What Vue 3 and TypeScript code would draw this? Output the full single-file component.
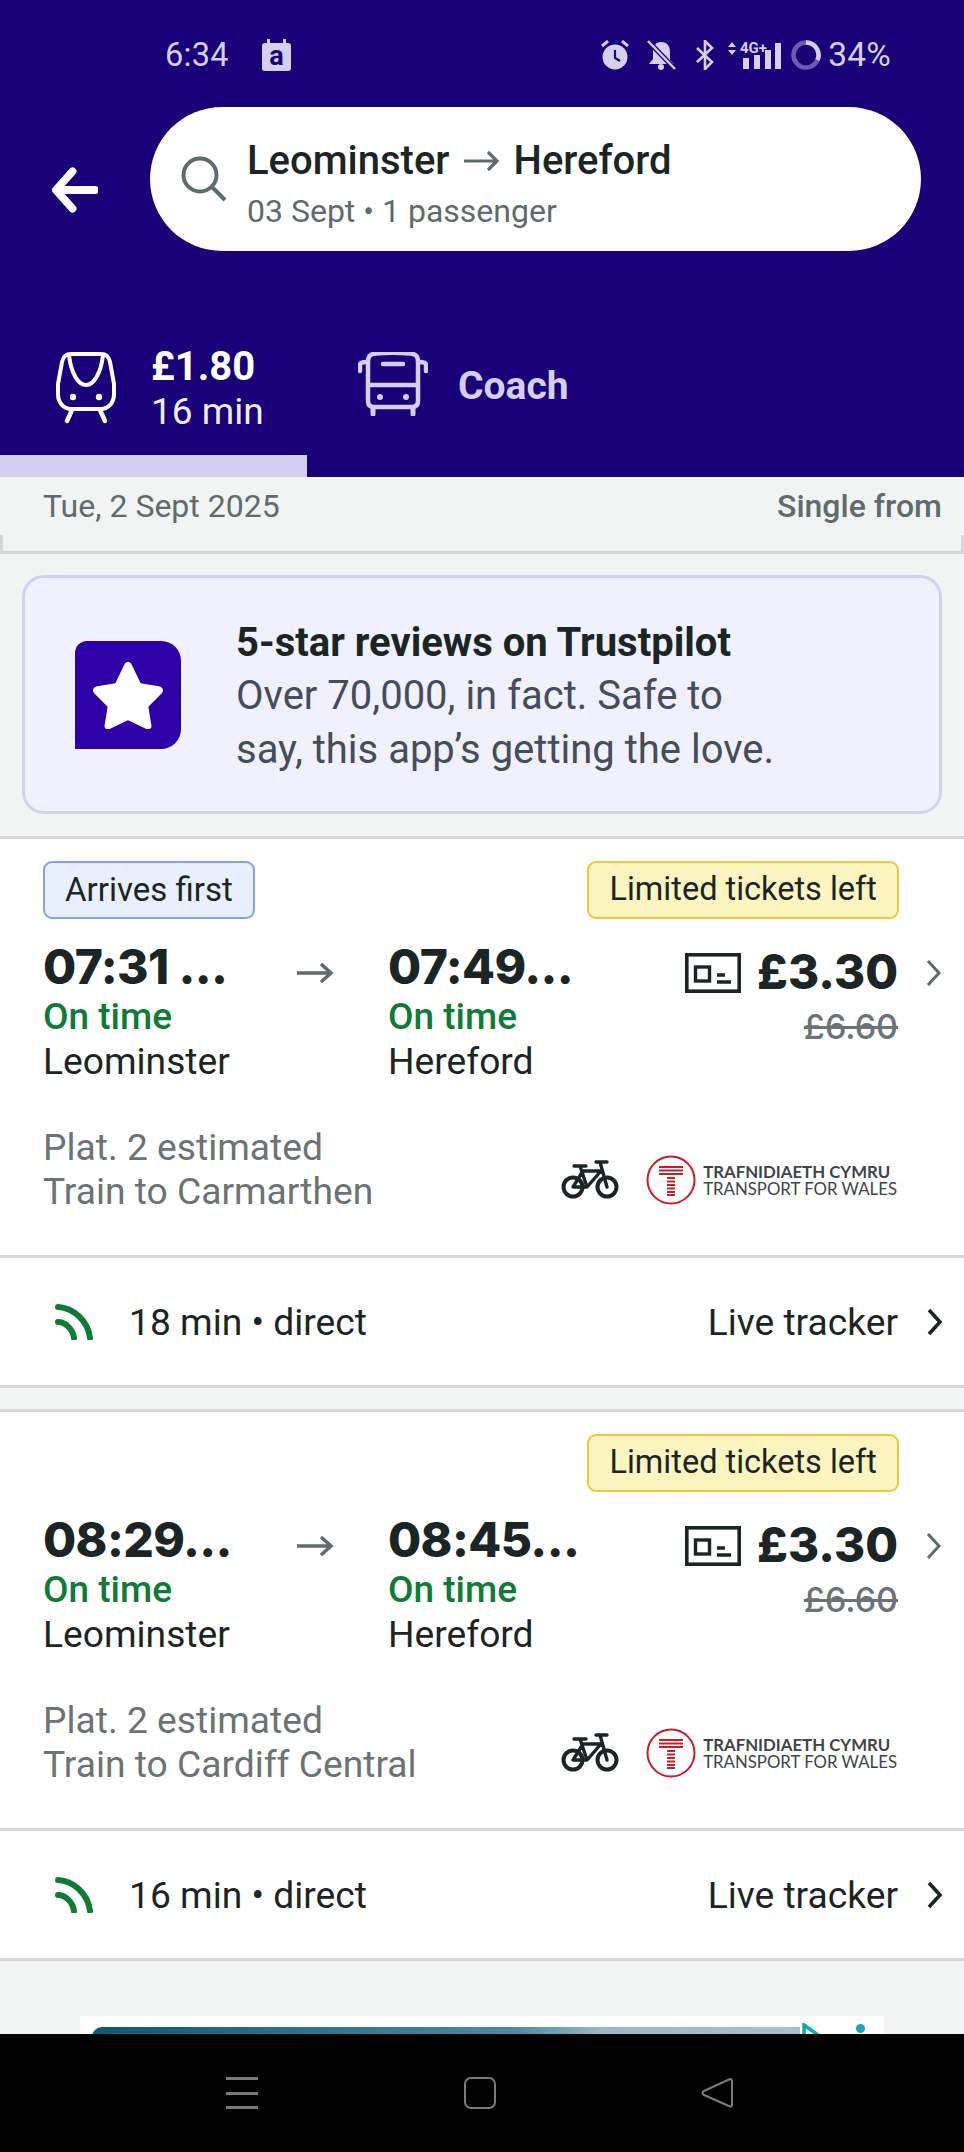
<script setup lang="ts">
interface Journey {
  badge?: string
  dep: string
  arr: string
  dest: string
  duration: string
}
const journeys: Journey[] = [
  { badge: 'Arrives first', dep: '07:31 ...', arr: '07:49...', dest: 'Train to Carmarthen', duration: '18 min • direct' },
  { dep: '08:29...', arr: '08:45...', dest: 'Train to Cardiff Central', duration: '16 min • direct' },
]
</script>

<template>
  <div class="page">
    <header class="header">
      <div class="status">
        <div class="status-left">
          <span class="clock">6:34</span>
          <span class="s-a">a</span>
        </div>
        <div class="status-right">
          <svg class="s-icon s-alarm" viewBox="0 0 28 30"><circle cx="14" cy="17" r="12.500" fill="#d5d0f0"/><path d="M14 10v8l5 3" stroke="#1a0078" stroke-width="2.200" fill="none"/><path d="M1 6l6-5M27 6l-6-5" stroke="#d5d0f0" stroke-width="3"/></svg>
          <svg class="s-icon s-bell" viewBox="0 0 29 30"><path d="M14 2c6 0 9 4 9 10v8l4 4H2l4-5v-7c0-6 3-10 8-10z" fill="#d5d0f0"/><circle cx="14" cy="27" r="3" fill="#d5d0f0"/><path d="M1 1l27 28" stroke="#1a0078" stroke-width="5"/><path d="M1 1l27 28" stroke="#d5d0f0" stroke-width="2.500"/></svg>
          <svg class="s-bt" viewBox="0 0 18 30"><path d="M1 8l15 14-7 7V1l7 7L1 22" stroke="#d5d0f0" stroke-width="2.600" fill="none"/></svg>
          <div class="s-signal">
            <svg viewBox="0 0 54 30"><path d="M1 7l4-5 4 5zM1 10l4 5 4-5z" fill="#d5d0f0"/><text x="13" y="13" font-family="Roboto, sans-serif" font-weight="700" font-size="15" fill="#d5d0f0">4G+</text><rect x="16" y="18" width="6" height="11" fill="#d5d0f0"/><rect x="27" y="15" width="6" height="14" fill="#d5d0f0"/><rect x="38" y="10" width="6" height="19" fill="#d5d0f0"/><rect x="48" y="3" width="6" height="26" fill="#d5d0f0"/></svg>
          </div>
          <svg class="s-ring" viewBox="0 0 30 30"><circle cx="15" cy="15" r="12.500" fill="none" stroke="#6a5cb0" stroke-width="4.500"/><path d="M15 2.500A12.500 12.500 0 0 1 26.500 20" fill="none" stroke="#d5d0f0" stroke-width="4.500"/></svg>
          <span class="battery">34%</span>
        </div>
      </div>

      <div class="search-row">
        <svg class="back" viewBox="0 0 48 46"><path d="M22 4L5 23l17 19M6 23h39" fill="none" stroke="#fff" stroke-width="8" stroke-linecap="round" stroke-linejoin="round"/></svg>
        <div class="pill">
          <svg class="search-icon" viewBox="0 0 46 46"><circle cx="19" cy="19" r="16.500" fill="none" stroke="#5f6b6c" stroke-width="4"/><path d="M31 31l13 13" stroke="#5f6b6c" stroke-width="4"/></svg>
          <div class="pill-text">
            <div class="route">
              <span>Leominster</span>
              <svg class="route-arrow" viewBox="0 0 36 22"><path d="M0 11h33M24 2l9 9-9 9" fill="none" stroke="#5f6b6c" stroke-width="3.200"/></svg>
              <span>Hereford</span>
            </div>
            <div class="route-sub">03 Sept • 1 passenger</div>
          </div>
        </div>
      </div>

      <div class="tabs">
        <div class="tab tab-active">
          <svg class="train" viewBox="0 0 60 72"><path d="M15 2h30c5 0 8 3 9 8l4 22v10c0 9-6 15-13 15H15C8 57 2 51 2 42V32l4-22c1-5 4-8 9-8z" fill="none" stroke="#fff" stroke-width="4"/><path d="M13 3c2 18 9 30 17 30s15-12 17-30" fill="none" stroke="#fff" stroke-width="4"/><circle cx="17" cy="45" r="3.200" fill="#fff"/><circle cx="43" cy="45" r="3.200" fill="#fff"/><path d="M16 58l-5 11M44 58l5 11" stroke="#fff" stroke-width="4.500" stroke-linecap="round"/></svg>
          <div class="tab-text">
            <div class="tab-price">£1.80</div>
            <div class="tab-time">16 min</div>
          </div>
        </div>
        <div class="tab tab-coach">
          <svg class="coach" viewBox="0 0 70 64"><path d="M10 10c0-6 2-8 8-8.500 12-1 22-1 34 0 6 .5 8 2.500 8 8.500v39c0 4-2 6-6 6H16c-4 0-6-2-6-6z" fill="none" stroke="#d4d0ec" stroke-width="4.500"/><path d="M10 33h50" stroke="#d4d0ec" stroke-width="4.500"/><path d="M25 12h20" stroke="#d4d0ec" stroke-width="4.500" stroke-linecap="round"/><path d="M2 19v-6c0-2 1-3 6-3M68 19v-6c0-2-1-3-6-3" fill="none" stroke="#d4d0ec" stroke-width="4.500" stroke-linecap="round"/><circle cx="22" cy="45" r="3" fill="#d4d0ec"/><circle cx="48" cy="45" r="3" fill="#d4d0ec"/><path d="M15 56v6M55 56v6" stroke="#d4d0ec" stroke-width="5" stroke-linecap="round"/></svg>
          <span class="coach-label">Coach</span>
        </div>
      </div>
      <div class="tab-indicator"></div>
    </header>

    <div class="date-row">
      <span class="date">Tue, 2 Sept 2025</span>
      <span class="single">Single from</span>
    </div>
    <div class="date-foot"></div>

    <section class="promo">
      <div class="promo-icon">
        <svg viewBox="0 0 74 70"><path d="M37 1c2 0 3 1 4 3l9 19 19 3c4 1 5 4 3 7L58 47l3 19c1 3-2 5-5 4L37 61 18 70c-3 1-6-1-5-4l3-19L2 33c-2-3-1-6 3-7l19-3 9-19c1-2 2-3 4-3z" fill="#fff"/></svg>
      </div>
      <div class="promo-text">
        <div class="promo-title">5-star reviews on Trustpilot</div>
        <div class="promo-body">Over 70,000, in fact. Safe to<br />say, this app’s getting the love.</div>
      </div>
    </section>

    <article v-for="j in journeys" :key="j.dep" class="journey">
      <div class="main">
        <div class="tags">
          <span v-if="j.badge" class="tag tag-blue">{{ j.badge }}</span>
          <span class="tag tag-yellow">Limited tickets left</span>
        </div>
        <div class="times">
          <div class="stop">
            <div class="time">{{ j.dep }}</div>
            <div class="ontime">On time</div>
            <div class="station">Leominster</div>
          </div>
          <svg class="mid-arrow" viewBox="0 0 38 24"><path d="M1 12h34M25 3l10 9-10 9" fill="none" stroke="#5f6b6c" stroke-width="3.500"/></svg>
          <div class="stop stop-arr">
            <div class="time">{{ j.arr }}</div>
            <div class="ontime">On time</div>
            <div class="station">Hereford</div>
          </div>
          <div class="fare">
            <div class="fare-top">
              <svg class="ticket" viewBox="0 0 56 40"><rect x="1.800" y="1.800" width="52.400" height="36.400" fill="none" stroke="#1c2526" stroke-width="3.600"/><rect x="10.500" y="14" width="14" height="14" fill="none" stroke="#1c2526" stroke-width="3.400"/><path d="M32 22h8M32 29h14" stroke="#1c2526" stroke-width="3.400"/></svg>
              <span class="price">£3.30</span>
            </div>
            <div class="old-price">£6.60</div>
          </div>
          <svg class="chev chev-grey" viewBox="0 0 16 28"><path d="M2 2l11 12L2 26" fill="none" stroke="#5f6b6c" stroke-width="3"/></svg>
        </div>
        <div class="details">
          <div class="plat">Plat. 2 estimated<br />{{ j.dest }}</div>
          <div class="brand">
            <svg class="bike" viewBox="0 0 58 40"><circle cx="12" cy="27" r="9.500" fill="none" stroke="#1c2526" stroke-width="4"/><circle cx="46" cy="27" r="9.500" fill="none" stroke="#1c2526" stroke-width="4"/><path d="M19 6l7 21H12l10-16h18L26 27M13 6h12M35 2h11M39 2l7 25" fill="none" stroke="#1c2526" stroke-width="3.400" stroke-linejoin="round" stroke-linecap="round"/></svg>
            <svg class="tfw-mark" viewBox="0 0 50 50"><circle cx="25" cy="25" r="23.500" fill="none" stroke="#c8202b" stroke-width="2"/><path d="M13 12h24M13 15.500h24M13 19h24M21 23h8M21 26.500h8M21 30h8M21 33.500h8M21 37h8M21 40h8" stroke="#c8202b" stroke-width="2"/></svg>
            <div class="tfw-text">
              <div class="tfw-cy">TRAFNIDIAETH CYMRU</div>
              <div class="tfw-en">TRANSPORT FOR WALES</div>
            </div>
          </div>
        </div>
      </div>
      <div class="live">
        <svg class="live-icon" viewBox="0 0 38 36"><path d="M3 3c16 1 30 14 32 31M3 18c8 0 15 8 16 16" fill="none" stroke="#0f7b37" stroke-width="6" stroke-linecap="round"/></svg>
        <span class="duration">{{ j.duration }}</span>
        <span class="tracker">Live tracker</span>
        <svg class="chev" viewBox="0 0 16 28"><path d="M2 2l11 12L2 26" fill="none" stroke="#1c2526" stroke-width="3.600"/></svg>
      </div>
    </article>

    <div class="ad">
      <div class="ad-image"></div>
      <svg class="ad-play" viewBox="0 0 28 36"><path d="M2 2l24 17L2 34z" fill="#e8f4f8" stroke="#14a5b8" stroke-width="3.500"/></svg>
      <span class="ad-dot"></span>
    </div>

    <nav class="navbar">
      <div class="nav-menu"><i></i><i></i><i></i></div>
      <div class="nav-home"></div>
      <svg class="nav-back" viewBox="0 0 32 32"><path d="M29 2c1 0 2 .5 2 2v24c0 1.500-1 2-2 1.500L3 18c-2-1-2-3 0-4L29 2z" fill="none" stroke="#7a7a7a" stroke-width="2"/></svg>
    </nav>
  </div>
</template>

<style>
html, body { margin: 0; padding: 0; background: #f2f4f3; }
</style>

<style scoped>
.page {
  position: relative;
  width: 964px;
  height: 2152px;
  overflow: hidden;
  background: #f2f4f3;
  font-family: Roboto, "Noto Sans", sans-serif;
  color: #1c2526;
}

/* header */
.header { background: #1a0078; height: 477px; display: flex; flex-direction: column; }
.status {
  height: 107px;
  box-sizing: border-box;
  padding: 39px 73px 0 165px;
  display: flex;
  justify-content: space-between;
  align-items: flex-start;
  color: #d5d0f0;
  font-size: 32px;
  line-height: 32px;
}
.status-left { display: flex; gap: 33px; align-items: center; }
.clock { font-size: 32.500px; letter-spacing: .3px; }
.s-a {
  position: relative;
  width: 29px;
  height: 28px;
  margin-top: 3px;
  border-radius: 3px;
  background: #d5d0f0;
  color: #1a0078;
  font-size: 27px;
  font-weight: 700;
  line-height: 26px;
  text-align: center;
}
.s-a::before {
  content: "";
  position: absolute;
  left: 5px;
  right: 5px;
  top: -4px;
  height: 5px;
  box-sizing: border-box;
  border: solid #d5d0f0;
  border-width: 0 3px;
}
.status-right { display: flex; align-items: center; }
.s-icon { width: 28px; height: 30px; }
.s-alarm { margin-right: 18px; }
.s-bell { width: 29px; margin-right: 20px; }
.s-bt { width: 18px; height: 30px; margin-right: 13px; }
.s-signal { width: 54px; height: 30px; margin-right: 10px; }
.s-signal svg { width: 100%; height: 100%; display: block; overflow: visible; }
.s-ring { width: 30px; height: 30px; margin-right: 7px; }
.battery { font-size: 33.500px; letter-spacing: .2px; }

.search-row { display: flex; align-items: center; height: 144px; padding-left: 51px; gap: 52px; }
.back { width: 47px; height: 46px; margin-top: 22px; }
.pill {
  width: 771px;
  height: 144px;
  box-sizing: border-box;
  background: #fff;
  border-radius: 72px;
  padding-left: 31px;
  display: flex;
  align-items: center;
  gap: 20px;
}
.search-icon { width: 46px; height: 46px; }
.pill-text { display: flex; flex-direction: column; margin-top: 14px; }
.route { display: flex; align-items: center; gap: 14px; font-size: 40px; line-height: 50px; font-weight: 500; color: #1c2526; }
.route-arrow { width: 36px; height: 22px; }
.route-sub { font-size: 32px; line-height: 50px; color: #5f6b6c; }

.tabs { display: flex; height: 204px; box-sizing: border-box; padding-top: 101px; }
.tab { display: flex; align-items: flex-start; }
.tab-active { width: 307px; padding-left: 56px; box-sizing: border-box; gap: 35px; }
.train { width: 60px; height: 72px; }
.tab-text { margin-top: -7px; }
.tab-price { font-size: 40px; line-height: 44px; font-weight: 700; color: #fff; }
.tab-time { font-size: 37px; line-height: 46px; color: #f0eefb; }
.tab-coach { margin-left: 51px; gap: 30px; }
.coach { width: 70px; height: 64px; }
.coach-label { font-size: 39px; line-height: 62px; font-weight: 700; color: #d4d0ec; margin-top: 3px; }
.tab-indicator { width: 307px; height: 22px; background: #d4cff2; }

/* date */
.date-row {
  height: 58px;
  padding: 0 22px 0 43px;
  display: flex;
  justify-content: space-between;
  align-items: center;
  font-size: 32px;
  color: #5f6b6c;
}
.single { font-weight: 500; }
.date-foot { height: 19px; box-sizing: border-box; border: solid #d5d8d6; border-width: 0 3px 3px; }

/* promo */
.promo {
  margin: 21px 22px 22px;
  height: 239px;
  box-sizing: border-box;
  background: #f1f1fd;
  border: 3px solid #d4d0f0;
  border-radius: 22px;
  padding-left: 50px;
  display: flex;
  align-items: center;
  gap: 55px;
}
.promo-icon {
  width: 106px;
  height: 108px;
  flex: none;
  background: #2e00a8;
  border-radius: 12px 20px 20px 0;
  display: flex;
  align-items: center;
  justify-content: center;
}
.promo-icon svg { width: 72px; height: 68px; }
.promo-text { margin-top: 5px; }
.promo-title { font-size: 40px; line-height: 52px; font-weight: 700; color: #1c2526; }
.promo-body { font-size: 40px; line-height: 54px; color: #454c5c; }

/* journey */
.journey { background: #fff; border-top: 3px solid #d5d8d6; border-bottom: 3px solid #d5d8d6; margin-bottom: 21px; }
.main { padding: 22px 24px 42px 43px; border-bottom: 3px solid #d5d8d6; }
.tags { display: flex; justify-content: space-between; padding-right: 41px; height: 58px; }
.tag {
  box-sizing: border-box;
  height: 58px;
  border-radius: 9px;
  border: 2.500px solid;
  font-size: 33px;
  line-height: 53px;
  padding: 0 20px;
  color: #1c2526;
  font-weight: 400;
}
.tag-blue { background: #e8f0fd; border-color: #84a4e0; }
.tag-yellow { background: #fdf5c0; border-color: #eec93c; margin-left: auto; font-size: 32.500px; }

.times { display: flex; align-items: flex-start; margin-top: 20px; }
.stop { width: 253px; flex: none; }
.stop-arr { width: 250px; margin-left: 54px; }
.mid-arrow { width: 38px; height: 24px; flex: none; margin-top: 22px; }
.time { font-family: Inter, Roboto, sans-serif; font-size: 48px; line-height: 56px; font-weight: 800; letter-spacing: -.6px; color: #1c2526; white-space: nowrap; }
.ontime { font-size: 37px; line-height: 44px; font-weight: 500; color: #0f7b37; }
.station { font-size: 37.200px; line-height: 44px; color: #1c2526; }
.fare { width: 213px; flex: none; margin-left: 47px; margin-top: 5px; display: flex; flex-direction: column; align-items: flex-end; }
.fare-top { display: flex; align-items: center; gap: 16px; height: 56px; }
.ticket { width: 56px; height: 40px; margin-top: 2px; }
.price { font-family: Inter, Roboto, sans-serif; font-size: 47.500px; line-height: 56px; font-weight: 800; color: #1c2526; }
.old-price { font-family: Inter, Roboto, sans-serif; font-size: 34px; line-height: 46px; font-weight: 500; color: #6b7375; text-decoration: line-through; margin-top: 4px; }
.chev { width: 16px; height: 28px; flex: none; }
.chev-grey { margin: 20px 0 0 28px; }

.details { display: flex; justify-content: space-between; align-items: center; margin-top: 42px; padding-right: 43px; }
.plat { font-size: 37.200px; line-height: 44px; color: #6b7375; }
.brand { display: flex; align-items: center; margin-top: 22px; }
.bike { width: 58px; height: 40px; margin-right: 27px; }
.tfw-mark { width: 50px; height: 50px; margin-right: 7px; }
.tfw-text { font-family: Lato, "Open Sans", sans-serif; font-size: 16.800px; line-height: 17px; color: #3d4548; white-space: nowrap; }
.tfw-cy { font-weight: 700; }

.live { height: 127px; display: flex; align-items: center; padding: 0 21px 0 55px; }
.live-icon { width: 38px; height: 36px; margin-right: 36px; }
.duration { font-size: 37.200px; color: #1c2526; }
.tracker { font-size: 37.200px; color: #1c2526; margin-left: auto; margin-right: 29px; }

/* ad */
.ad {
  position: relative;
  margin: 55px 80px 0;
  height: 30px;
  background: #fff;
}
.ad-image {
  position: absolute;
  left: 12px;
  top: 11px;
  width: 708px;
  height: 19px;
  border-radius: 10px 0 0 0;
  background: linear-gradient(90deg, #0c5a72, #4d8ba3 60%, #9ab8c8 72%, #a7c2cf 100%);
}
.ad-play { position: absolute; left: 722px; top: 7px; width: 28px; height: 36px; }
.ad-dot { position: absolute; left: 776px; top: 8px; width: 9px; height: 9px; border-radius: 50%; background: #14a5b8; }

/* nav */
.navbar {
  position: absolute;
  left: 0;
  right: 0;
  bottom: 0;
  height: 118px;
  background: #000;
  display: flex;
  align-items: flex-start;
  padding: 43px 231px 0 226px;
  box-sizing: border-box;
  justify-content: space-between;
}
.nav-menu { width: 32px; height: 32px; display: flex; flex-direction: column; justify-content: space-between; }
.nav-menu i { display: block; height: 3px; background: #7a7a7a; }
.nav-home { width: 32px; height: 32px; box-sizing: border-box; border: 2.500px solid #7a7a7a; border-radius: 7px; }
.nav-back { width: 32px; height: 32px; }
</style>
